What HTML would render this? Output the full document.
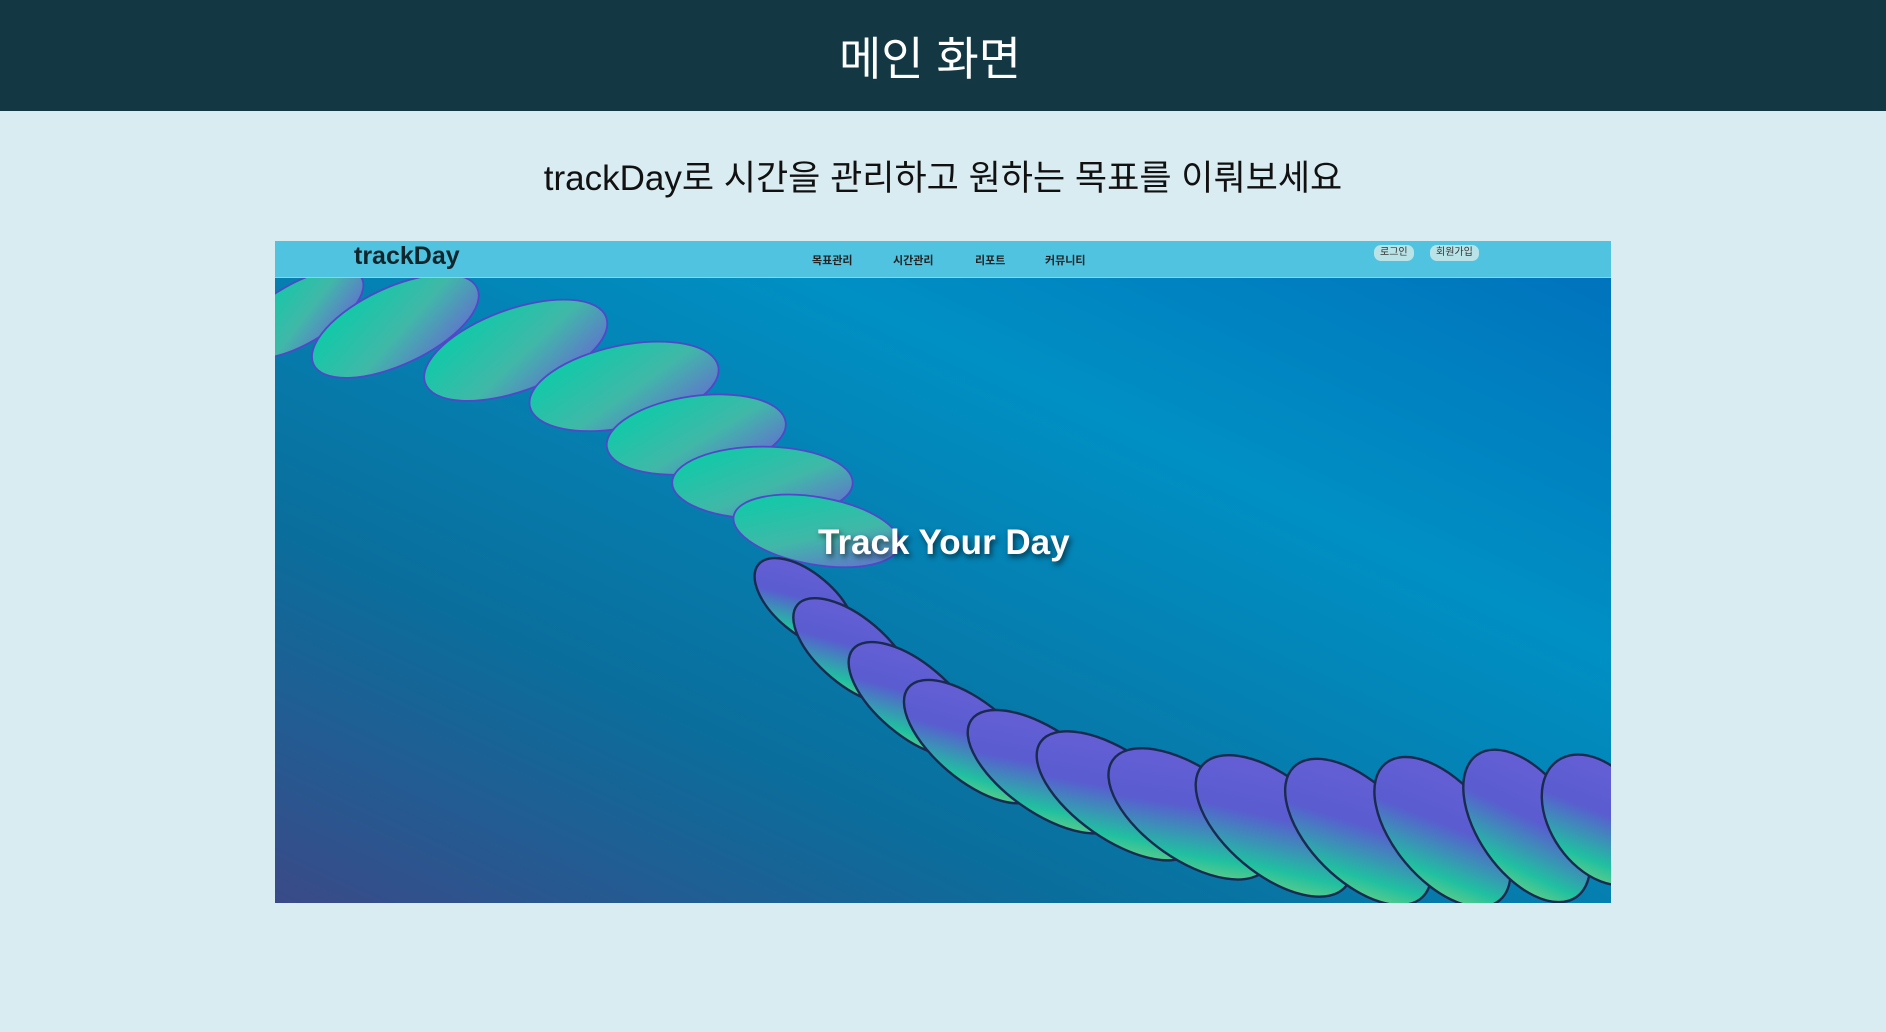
<!DOCTYPE html>
<html><head><meta charset="utf-8"><style>
*{margin:0;padding:0;box-sizing:border-box}
body{width:1886px;height:1032px;background:#d9ecf2;font-family:"Liberation Sans","Noto Sans CJK KR",sans-serif;overflow:hidden;position:relative}
.hdr{height:111px;background:#133843;color:#fff;font-size:46px;text-align:center;line-height:118px;padding-right:26px}
.sub{position:absolute;top:150px;width:100%;text-align:center;font-size:35px;color:#111}
.box{position:absolute;left:275px;top:241px;width:1336px;height:662px;overflow:hidden}
.nav{height:37px;background:#4fc3e0;position:relative;border-bottom:1px solid #8fd3e3}
.logo{position:absolute;left:79px;top:1px;font-size:25px;font-weight:bold;color:#10262d}
.m{position:absolute;top:11px;font-size:11px;color:#222;font-weight:bold}
.b{position:absolute;top:4px;height:16px;font-size:10px;background:#b9e3e6;border-radius:7px;padding:0 6px;line-height:16px;color:#333}
.img{position:relative;height:625px}
.t{position:absolute;top:245px;left:543px;color:#fff;font-weight:bold;font-size:35px;text-shadow:2px 3px 6px rgba(0,0,0,.6)}
</style></head><body>
<div class="hdr">메인 화면</div>
<div class="sub">trackDay로 시간을 관리하고 원하는 목표를 이뤄보세요</div>
<div class="box">
<div class="nav"><div class="logo">trackDay</div>
<div class="m" style="left:537px">목표관리</div><div class="m" style="left:618px">시간관리</div><div class="m" style="left:700px">리포트</div><div class="m" style="left:770px">커뮤니티</div>
<div class="b" style="left:1099px">로그인</div><div class="b" style="left:1155px">회원가입</div></div>
<div class="img">
<svg width="1336" height="625" viewBox="0 0 1110 519" preserveAspectRatio="none" style="position:absolute;left:0;top:0">
<defs>
<linearGradient id="bg" x1="0" y1="1" x2="1" y2="0"><stop offset="0" stop-color="#3a4a88"/><stop offset=".3" stop-color="#0a6e9c"/><stop offset=".7" stop-color="#0090c4"/><stop offset="1" stop-color="#0073bd"/></linearGradient>
<linearGradient id="lf" x1="0" y1="0" x2="1" y2="1"><stop offset="0" stop-color="#00d0a8"/><stop offset=".55" stop-color="#40b8a8"/><stop offset="1" stop-color="#6a5fd8"/></linearGradient>
<linearGradient id="lf2" x1="0" y1="0" x2="1" y2="1"><stop offset="0" stop-color="#6a60d8"/><stop offset=".45" stop-color="#5a5cd0"/><stop offset=".75" stop-color="#20c0a0"/><stop offset="1" stop-color="#a0d870"/></linearGradient>
</defs>
<rect width="1110" height="519" fill="url(#bg)"/>
<g fill="url(#lf)" stroke="#5048c8" stroke-width="1.5">
<ellipse cx="20" cy="30" rx="60" ry="25" transform="rotate(-30 20 30)"/>
<ellipse cx="100" cy="40" rx="75" ry="32" transform="rotate(-25 100 40)"/>
<ellipse cx="200" cy="60" rx="80" ry="34" transform="rotate(-20 200 60)"/>
<ellipse cx="290" cy="90" rx="80" ry="34" transform="rotate(-12 290 90)"/>
<ellipse cx="350" cy="130" rx="75" ry="32" transform="rotate(-8 350 130)"/>
<ellipse cx="405" cy="170" rx="75" ry="30" transform="rotate(0 405 170)"/>
<ellipse cx="450" cy="210" rx="70" ry="28" transform="rotate(10 450 210)"/>
</g>
<g fill="url(#lf2)" stroke="#1a2a50" stroke-width="2">
<ellipse cx="440" cy="270" rx="50" ry="25" transform="rotate(40 440 270)"/>
<ellipse cx="480" cy="310" rx="60" ry="28" transform="rotate(40 480 310)"/>
<ellipse cx="530" cy="350" rx="65" ry="30" transform="rotate(40 530 350)"/>
<ellipse cx="580" cy="385" rx="70" ry="32" transform="rotate(40 580 385)"/>
<ellipse cx="640" cy="410" rx="75" ry="34" transform="rotate(35 640 410)"/>
<ellipse cx="700" cy="430" rx="78" ry="36" transform="rotate(35 700 430)"/>
<ellipse cx="760" cy="445" rx="78" ry="38" transform="rotate(35 760 445)"/>
<ellipse cx="830" cy="455" rx="78" ry="40" transform="rotate(40 830 455)"/>
<ellipse cx="900" cy="460" rx="76" ry="40" transform="rotate(45 900 460)"/>
<ellipse cx="970" cy="460" rx="74" ry="40" transform="rotate(50 970 460)"/>
<ellipse cx="1040" cy="455" rx="72" ry="40" transform="rotate(55 1040 455)"/>
<ellipse cx="1100" cy="450" rx="60" ry="40" transform="rotate(55 1100 450)"/>
</g>
</svg>
<div class="t">Track Your Day</div>
</div></div>
</body></html>
